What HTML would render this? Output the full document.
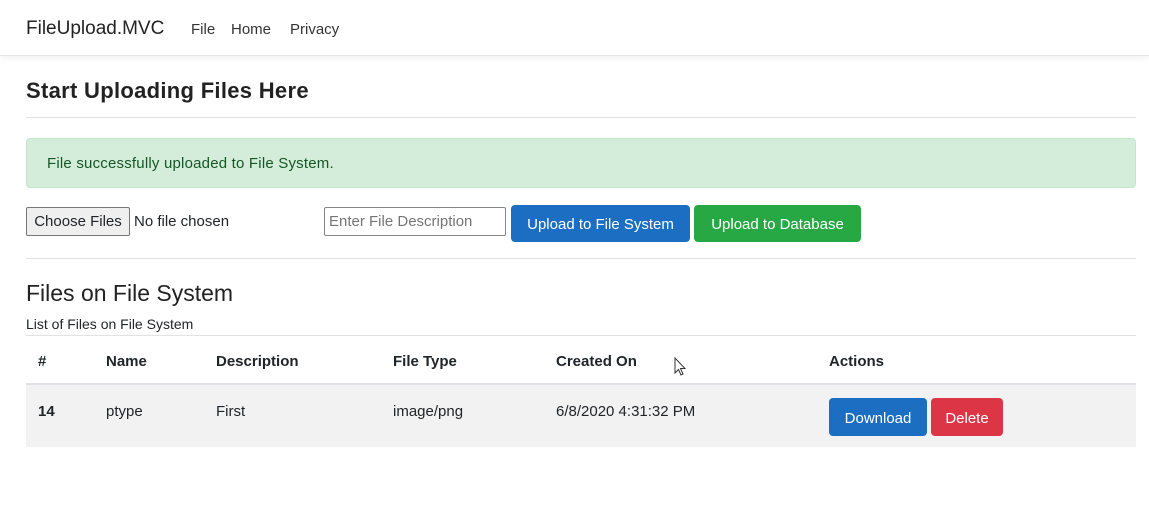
<!DOCTYPE html>
<html><head><meta charset="utf-8"><style>
*{box-sizing:border-box;margin:0;padding:0}
body{width:1149px;height:515px;background:#fff;font-family:"Liberation Sans",sans-serif;color:#212529;position:relative;overflow:hidden}
.a{position:absolute;white-space:nowrap}
.nav{position:absolute;left:0;top:0;width:1149px;height:56px;border-bottom:1px solid #e5e5e5;box-shadow:0 2px 6px rgba(0,0,0,.06)}
.btn{position:absolute;color:#fff;border-radius:4px;font-size:15px;display:flex;align-items:center;justify-content:center;padding-top:2px}
.hr{position:absolute;left:26px;width:1110px;height:1px;background:#e2e2e2}
.th{font-weight:bold;font-size:15px}
</style></head><body>
<div class="nav"></div>
<div class="a" style="left:26px;top:18px;font-size:19px;color:#222">FileUpload.MVC</div>
<div class="a" style="left:191px;top:21px;font-size:15px;color:#333">File</div>
<div class="a" style="left:231px;top:21px;font-size:15px;color:#333">Home</div>
<div class="a" style="left:290px;top:21px;font-size:15px;color:#333">Privacy</div>

<div class="a" style="left:26px;top:78px;font-size:22px;font-weight:bold;color:#222;letter-spacing:0.3px">Start Uploading Files Here</div>
<div class="hr" style="top:117px"></div>

<div class="a" style="left:26px;top:138px;width:1110px;height:50px;background:#d4edda;border:1px solid #c3e6cb;border-radius:4px"></div>
<div class="a" style="left:47px;top:155px;font-size:15px;color:#155724;letter-spacing:0.2px">File successfully uploaded to File System.</div>

<div class="a" style="left:26px;top:207px;width:104px;height:29px;background:#efefef;border:1px solid #767676;border-radius:2px;font-size:15px;text-align:center;line-height:28px">Choose Files</div>
<div class="a" style="left:134px;top:213px;font-size:15px">No file chosen</div>
<div class="a" style="left:324px;top:207px;width:182px;height:29px;border:1px solid #858585;border-radius:2px;font-size:15px;color:#757575;padding-left:4px;line-height:28px">Enter File Description</div>
<div class="btn" style="left:511px;top:205px;width:179px;height:37px;background:#1b6ec2">Upload to File System</div>
<div class="btn" style="left:694px;top:205px;width:167px;height:37px;background:#28a745">Upload to Database</div>
<div class="hr" style="top:258px"></div>

<div class="a" style="left:26px;top:280px;font-size:23px;font-weight:500;color:#222">Files on File System</div>
<div class="a" style="left:26px;top:316px;font-size:14px">List of Files on File System</div>
<div class="hr" style="top:335px"></div>
<div class="a th" style="left:38px;top:353px">#</div>
<div class="a th" style="left:106px;top:353px">Name</div>
<div class="a th" style="left:216px;top:353px">Description</div>
<div class="a th" style="left:393px;top:353px">File Type</div>
<div class="a th" style="left:556px;top:353px">Created On</div>
<div class="a th" style="left:829px;top:353px">Actions</div>
<div class="a" style="left:26px;top:383px;width:1110px;height:2px;background:#dee2e6"></div>
<div class="a" style="left:26px;top:385px;width:1110px;height:62px;background:#f2f2f2"></div>
<div class="a" style="left:38px;top:403px;font-size:15px;font-weight:bold">14</div>
<div class="a" style="left:106px;top:403px;font-size:15px">ptype</div>
<div class="a" style="left:216px;top:403px;font-size:15px">First</div>
<div class="a" style="left:393px;top:403px;font-size:15px">image/png</div>
<div class="a" style="left:556px;top:403px;font-size:15px">6/8/2020 4:31:32 PM</div>
<div class="btn" style="left:829px;top:398px;width:98px;height:38px;background:#1b6ec2">Download</div>
<div class="btn" style="left:931px;top:398px;width:72px;height:38px;background:#dc3545">Delete</div>
<svg class="a" style="left:674px;top:357px" width="12" height="20" viewBox="0 0 12 20"><path d="M1 1 L1 16 L4.5 12.5 L7 18 L9 17 L6.5 11.5 L11 11.5 Z" fill="#fff" stroke="#333" stroke-width="1"/></svg>
</body></html>
